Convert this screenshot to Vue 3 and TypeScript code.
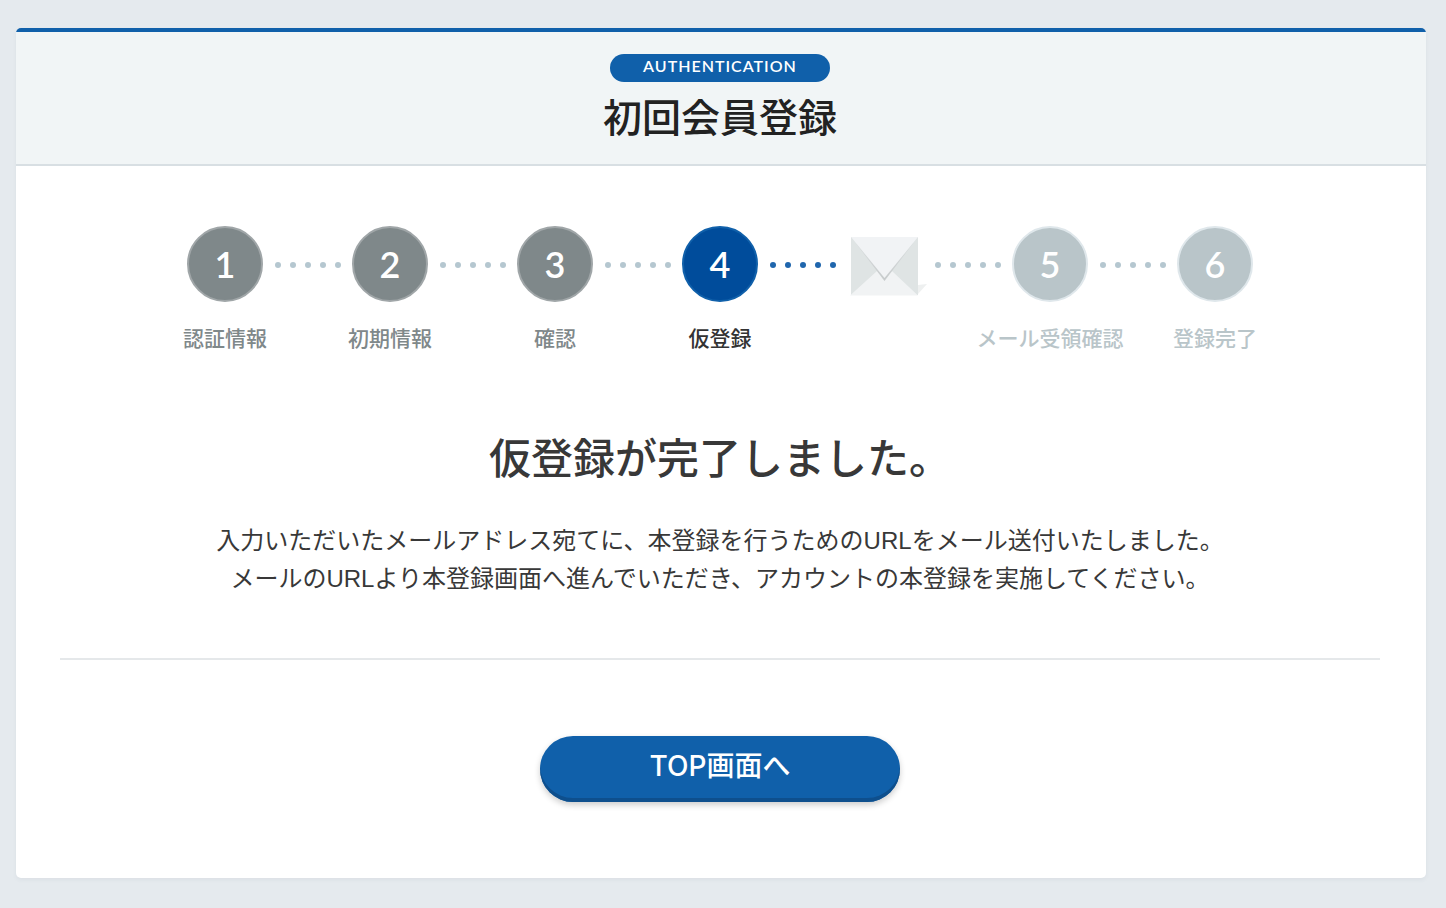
<script setup lang="ts">
type StepState = 'done' | 'current' | 'mail' | 'upcoming'

interface Step {
  id: string
  number?: number
  label?: string
  state: StepState
}

const steps: Step[] = [
  { id: 'auth', number: 1, label: '認証情報', state: 'done' },
  { id: 'initial', number: 2, label: '初期情報', state: 'done' },
  { id: 'confirm', number: 3, label: '確認', state: 'done' },
  { id: 'provisional', number: 4, label: '仮登録', state: 'current' },
  { id: 'mail', state: 'mail' },
  { id: 'receipt', number: 5, label: 'メール受領確認', state: 'upcoming' },
  { id: 'complete', number: 6, label: '登録完了', state: 'upcoming' },
]
</script>

<template>
  <main class="card">
    <header class="header">
      <p class="badge">AUTHENTICATION</p>
      <h1 class="title">初回会員登録</h1>
    </header>

    <div class="body">
      <ol class="steps">
        <template v-for="(step, index) in steps" :key="step.id">
          <li class="step" :class="step.state" :aria-current="step.state === 'current' ? 'step' : undefined">
            <svg v-if="step.state === 'mail'" class="envelope" viewBox="0 0 84 76" aria-hidden="true">
              <defs>
                <linearGradient id="flap-shade" x1="0" y1="0" x2="0" y2="1">
                  <stop offset="0" stop-color="#dde1e2" />
                  <stop offset="1" stop-color="#c6cacb" />
                </linearGradient>
              </defs>
              <path d="M75 59 L84 58 L75 68 Z" fill="#eef0f0" />
              <rect x="8" y="11" width="67" height="58" fill="#dfe4e4" />
              <path d="M7 69.500 L34 45 Q41.500 38 49 45 L75 69.500 Z" fill="#f1f3f4" />
              <path d="M8 11 L41.500 55 L75 11 Z" fill="url(#flap-shade)" />
              <path d="M8 11 L41.500 52 L75 11 Z" fill="#f1f3f5" />
            </svg>
            <template v-else>
              <span class="circle">{{ step.number }}</span>
              <span class="label">{{ step.label }}</span>
            </template>
          </li>
          <li v-if="index < steps.length - 1" class="dots" :class="{ active: step.state === 'current' }" aria-hidden="true">
            <i v-for="n in 5" :key="n" class="dot"></i>
          </li>
        </template>
      </ol>

      <h2 class="heading">仮登録が完了しました。</h2>
      <p class="message">
        入力いただいたメールアドレス宛てに、本登録を行うためのURLをメール送付いたしました。<br />
        メールのURLより本登録画面へ進んでいただき、アカウントの本登録を実施してください。
      </p>

      <div class="actions">
        <button type="button" class="button">TOP画面へ</button>
      </div>
    </div>
  </main>
</template>

<style>
body {
  background: #e5eaee;
}
</style>

<style scoped>
.card {
  box-sizing: border-box;
  margin: 28px 20px 30px 16px;
  border-top: 4px solid #1060aa;
  border-radius: 5px;
  background: #fff;
  box-shadow: 0 2px 4px rgba(60, 80, 100, 0.06);
  color: #383838;
  font-family: "Liberation Sans", "Noto Sans CJK JP", sans-serif;
}

.header {
  display: flex;
  flex-direction: column;
  align-items: center;
  padding: 22px 2px 16px 0;
  border-bottom: 2px solid #d8dfe3;
  background: #f1f5f6;
}

.badge {
  width: 220px;
  height: 28px;
  margin: 0;
  border-radius: 14px;
  background: #1060aa;
  color: #fff;
  font: 600 16px/24px Lato, sans-serif;
  letter-spacing: 1px;
  text-align: center;
}

.title {
  margin: 8px 0 0;
  color: #222;
  font-size: 39px;
  font-weight: 500;
  line-height: 58px;
}

.body {
  padding: 60px 46px 76px 44px;
}

.steps {
  display: flex;
  justify-content: center;
  margin: 0;
  padding: 0;
  list-style: none;
}

.step {
  display: flex;
  flex-direction: column;
  align-items: center;
  width: 76px;
  color: #7f888a;
}

.circle {
  box-sizing: border-box;
  width: 76px;
  height: 76px;
  border: 2px solid #a0a6a8;
  border-radius: 50%;
  background: #7f888a;
  color: #fff;
  font: 600 36px/72px Lato, sans-serif;
  text-align: center;
}

.label {
  margin-top: 20px;
  font-size: 21px;
  font-weight: 500;
  line-height: 34px;
  white-space: nowrap;
}

.current {
  color: #333;
}

.current .circle {
  border-color: #1060aa;
  background: #004c9b;
}

.upcoming {
  color: #b9c5c9;
}

.upcoming .circle {
  border-color: #dfe7eb;
  background: #b9c5c9;
}

.envelope {
  flex-shrink: 0;
  width: 84px;
  height: 76px;
}

.dots {
  display: flex;
  align-items: center;
  justify-content: center;
  gap: 9px;
  width: 89px;
  height: 78px;
  color: #b5c7d0;
}

.dots.active {
  color: #1f66ad;
}

.dot {
  width: 6px;
  height: 6px;
  border-radius: 50%;
  background: currentColor;
}

.heading {
  margin: 72px 0 0;
  font-size: 42px;
  font-weight: 500;
  line-height: 64px;
  text-align: center;
}

.message {
  margin: 30px 0 0;
  padding-bottom: 60px;
  border-bottom: 2px solid #e5e8ea;
  font-size: 24px;
  line-height: 38px;
  text-align: center;
}

.actions {
  display: flex;
  justify-content: center;
  padding-top: 76px;
}

.button {
  width: 360px;
  height: 66px;
  padding: 0 0 6px;
  border: 0;
  border-radius: 33px;
  background: #1060aa;
  box-shadow: inset 0 -4px 0 #0e4f8d, 0 3px 6px rgba(0, 0, 0, 0.2);
  color: #fff;
  font: 500 28px/40px Inter, "Noto Sans CJK JP", sans-serif;
  cursor: pointer;
}
</style>
